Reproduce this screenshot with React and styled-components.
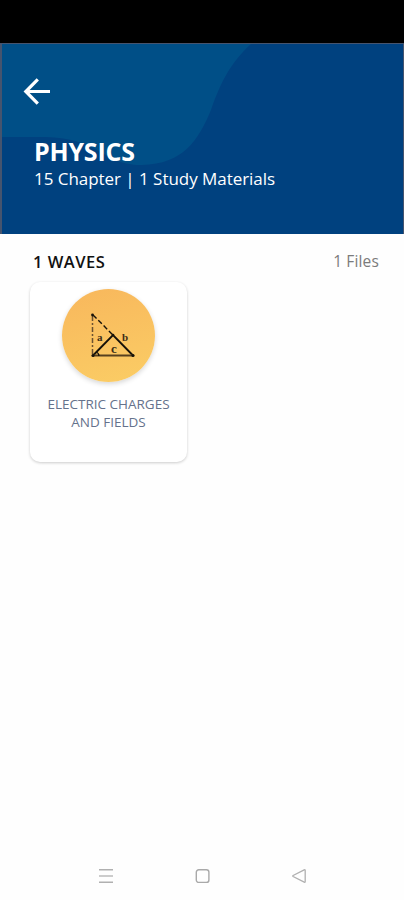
import React from "react";
import styled, { createGlobalStyle } from "styled-components";

const GlobalStyle = createGlobalStyle`
  * {
    box-sizing: border-box;
  }

  body {
    margin: 0;
    background: #ffffff;
    font-family: "Open Sans", "Noto Sans", sans-serif;
  }
`;

const Screen = styled.div`
  display: flex;
  flex-direction: column;
  height: 900px;
  background: #fefefe;
`;

const StatusBar = styled.div`
  height: 43px;
  background: #000000;
`;

const Header = styled.header`
  position: relative;
  height: 191px;
  padding: 32px 0 0 20px;
  border: solid #46546e;
  border-width: 1px 1px 0 2px;
  background: #00417f;
  color: #ffffff;
`;

const HeaderShape = styled.svg`
  position: absolute;
  top: 0;
  left: 0;
`;

const BackButton = styled.button`
  position: relative;
  display: block;
  width: 30px;
  height: 30px;
  padding: 0;
  border: 0;
  background: none;
`;

const Heading = styled.div`
  position: relative;
  padding: 28px 0 0 12px;
`;

const Title = styled.h1`
  margin: 0;
  font-size: 25px;
  font-weight: 700;
  line-height: 34px;
  letter-spacing: -0.2px;
`;

const Subtitle = styled.p`
  margin: 0;
  font-size: 17px;
  line-height: 22px;
  letter-spacing: -0.04px;
`;

const SectionHeader = styled.div`
  display: flex;
  align-items: center;
  justify-content: space-between;
  height: 48px;
  padding: 6px 25px 0 33px;
`;

const SectionTitle = styled.h2`
  margin: 0;
  color: #111111;
  font-size: 16.5px;
  font-weight: 600;
  letter-spacing: 0.5px;
`;

const FileCount = styled.span`
  color: #7b7b7b;
  font-size: 15.5px;
  letter-spacing: 0.15px;
`;

const Grid = styled.main`
  display: flex;
  flex: 1;
  align-items: flex-start;
  padding-left: 30px;
`;

const Card = styled.article`
  display: flex;
  flex-direction: column;
  align-items: center;
  width: 157px;
  height: 180px;
  padding-top: 7px;
  border-radius: 10px;
  background: #ffffff;
  box-shadow: 0 1px 3px rgba(0, 0, 0, 0.2);
`;

const Badge = styled.div`
  width: 93px;
  height: 93px;
  border-radius: 50%;
  background: linear-gradient(165deg, #f8b75c, #fbcd65);
  box-shadow: 0 2px 5px rgba(0, 0, 0, 0.16);
`;

const CardTitle = styled.h3`
  width: 140px;
  margin: 13px 0 0;
  color: #65728c;
  font-size: 13.5px;
  font-weight: 400;
  line-height: 18px;
  text-align: center;
`;

const NavBar = styled.nav`
  display: flex;
  justify-content: space-between;
  align-items: center;
  height: 48px;
  padding: 0 97px 0 98px;
`;

const BackIcon = () => (
  <svg width="30" height="30" viewBox="0 0 30 30" fill="none" stroke="#fff" strokeWidth="3.2">
    <path d="M28 15.5H5M15.8 3.4L3.8 15.5L15.8 27.6" />
  </svg>
);

const TriangleIcon = () => (
  <svg width="93" height="93" viewBox="0 0 93 93" fill="none" stroke="#171209">
    <path d="M30.5 27V66" stroke="#6b5130" strokeWidth="1.5" strokeDasharray="5 2 2 2" />
    <path d="M31 26L51 46" strokeWidth="1.4" strokeDasharray="5 2.5" />
    <path d="M31 66.5L51 46L71 66.5" strokeWidth="1.9" />
    <path d="M31 66.5H71" stroke="#57401f" strokeWidth="2" />
    <path d="M34 63Q37 64 37 67" strokeWidth="1.2" />
    <g fill="#171209" stroke="none">
      <circle cx="30.5" cy="26" r="1.4" />
      <circle cx="31" cy="66.5" r="1.6" />
      <circle cx="71" cy="66.5" r="1.6" />
      <circle cx="51" cy="46" r="1.3" />
    </g>
    <g
      fill="#3d2e17"
      stroke="none"
      fontFamily="Liberation Serif, serif"
      fontSize="11"
      fontWeight="700"
    >
      <text x="35" y="52">a</text>
      <text x="60" y="52">b</text>
      <text x="49" y="64" fontSize="13">c</text>
    </g>
  </svg>
);

const MenuIcon = () => (
  <svg width="16" height="16" viewBox="0 0 16 16" stroke="#b0b0b0" strokeWidth="1.6">
    <path d="M1 1.8H15M1 14.2H15" />
    <path d="M1 8H15" stroke="#cccccc" strokeWidth="2" />
  </svg>
);

const HomeIcon = () => (
  <svg width="16" height="16" viewBox="0 0 16 16" fill="none" stroke="#a9a9a9" strokeWidth="1.4">
    <rect x="1.3" y="1.8" width="12.6" height="12.6" rx="2.5" />
  </svg>
);

const NavBackIcon = () => (
  <svg width="16" height="16" viewBox="0 0 16 16" fill="none" stroke="#b0b0b0" strokeWidth="1.3">
    <path d="M13.2 1.8L2.1 7.5Q1.3 8 2.1 8.5L13.2 14.2Q14.2 14.5 14.2 13.5V2.5Q14.2 1.5 13.2 1.8Z" />
  </svg>
);

const App = () => {
  return (
    <Screen>
      <GlobalStyle />
      <StatusBar />
      <Header>
        <HeaderShape width="260" height="125" viewBox="0 0 260 125" fill="#004f87">
          <path d="M0 0H249C228 19 218 40 209 66C196 97 181 120 140 121C103 122 98 94 43 93H0Z" />
        </HeaderShape>
        <BackButton aria-label="Back">
          <BackIcon />
        </BackButton>
        <Heading>
          <Title>PHYSICS</Title>
          <Subtitle>15 Chapter | 1 Study Materials</Subtitle>
        </Heading>
      </Header>
      <SectionHeader>
        <SectionTitle>1 WAVES</SectionTitle>
        <FileCount>1 Files</FileCount>
      </SectionHeader>
      <Grid>
        <Card>
          <Badge>
            <TriangleIcon />
          </Badge>
          <CardTitle>ELECTRIC CHARGES AND FIELDS</CardTitle>
        </Card>
      </Grid>
      <NavBar>
        <MenuIcon />
        <HomeIcon />
        <NavBackIcon />
      </NavBar>
    </Screen>
  );
};

export default App;
